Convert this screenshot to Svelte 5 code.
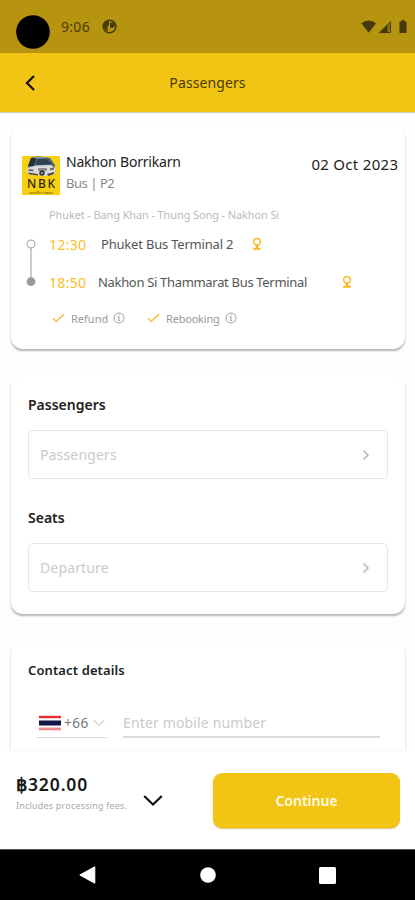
<script>
  const benefits = ['Refund', 'Rebooking'];
  const fields = [
    { title: 'Passengers', hint: 'Passengers', cls: 'pax' },
    { title: 'Seats', hint: 'Departure', cls: 'seats' }
  ];
</script>

{#snippet pin()}
  <svg class="pin" width="10" height="14" viewBox="0 0 10 14">
    <circle cx="5" cy="4.8" r="3.4" fill="#fffaf0" stroke="#f9bd2c" stroke-width="1.5" />
    <path d="M3.2 7.4h3.6L5.8 11H4.2zM1.3 10.8h7.4v2H1.3z" fill="#f8b51c" />
  </svg>
{/snippet}

<div class="screen">
  <div class="status">
    <svg width="34" height="34" viewBox="0 0 34 34"><circle cx="17" cy="17" r="16.8" /></svg>
    <span class="clock">9:06</span>
    <svg class="app-dot" width="15" height="15" viewBox="0 0 15 15">
      <circle cx="7.5" cy="7.5" r="6.3" fill="none" stroke="#453a08" stroke-width="1.6" />
      <path d="M2 3.5L5 2h2v4.5H5.6v5.8L3.6 11C1.6 9 1.5 6 2 3.5zM8 3.4h3.6l1.6 3.2-2.2 2.2H8z" fill="#453a08" />
    </svg>
    <svg class="signals" width="47" height="16" viewBox="0 0 47 16" fill="#453a08">
      <path d="M.3 4.2Q7.7-1.3 15.1 4.2L7.7 13.7z" />
      <path d="M18 14L30 2v12z" opacity=".35" />
      <path d="M18 14L26.5 5.5V14z" />
      <path d="M18.8 13.6L29.5 2.8v10.8z" fill="none" stroke="#453a08" stroke-width=".9" />
      <path d="M38.5 2.6h2V1h3v1.6h2V14h-7z" />
    </svg>
  </div>

  <header>
    <svg class="back" width="12" height="18" viewBox="0 0 12 18"><path d="M10 2L3 9l7 7" fill="none" stroke="#171100" stroke-width="2.3" /></svg>
    <h1>Passengers</h1>
  </header>

  <main>
    <section class="card trip">
      <div class="operator">
        <div class="logo">
          <svg width="38" height="22" viewBox="0 0 38 22">
            <path d="M6 10L9 2l7-1.5L28 2l5 7-1 6-25 1z" fill="#506575" />
            <path d="M6 10L9 2l6-1.5L12 10z" fill="#23313c" />
            <path d="M15 3l10 .3 5 5-16 .5z" fill="#2f4150" />
            <path d="M10 1.6l7-1.1 10 1.2-12 1z" fill="#8797a2" />
            <path d="M5 12l9-2.5L29 9l4 3v6l-9 2-17-1.5L5 16z" fill="#dcdcde" />
            <path d="M16 12h9v3h-9z" fill="#8d8f92" />
            <path d="M6.5 13l5 .6v2l-5-.6zM28 12l4-.5v2.2l-4 .6z" fill="#6a6d70" />
            <circle cx="20" cy="17" r="2.8" fill="#363a3a" />
            <circle cx="20" cy="17" r="1.1" fill="#aaa99e" />
            <path d="M6 16.5l10 1.4v1.6l-9-1.2zM25 18l7-2v2l-6 2z" fill="#4b4a42" />
          </svg>
          <b>NBK</b>
          <small>นครบริการขนส่ง</small>
        </div>
        <div class="names"><h2>Nakhon Borrikarn</h2><p>Bus | P2</p></div>
        <time class="date">02 Oct 2023</time>
      </div>
      <p class="route">Phuket - Bang Khan - Thung Song - Nakhon Si</p>
      <div class="stops">
        <svg class="track" width="10" height="50" viewBox="0 0 10 50">
          <path d="M5 9v30" stroke="#aaa" stroke-width="1.2" />
          <circle cx="5" cy="5" r="3.9" fill="#fff" stroke="#aaa" stroke-width="1.1" />
          <circle cx="5" cy="42.7" r="4.4" fill="#999" />
        </svg>
        <div class="stop-list">
          <div class="stop first"><time>12:30</time><span>Phuket Bus Terminal 2</span>{@render pin()}</div>
          <div class="stop last"><time>18:50</time><span>Nakhon Si Thammarat Bus Terminal</span>{@render pin()}</div>
        </div>
      </div>
      <div class="benefits">
        {#each benefits as label}
          <div class="benefit">
            <svg width="13" height="12" viewBox="0 0 13 12"><path d="M1 6.5L4.2 9.3 12 2.4" fill="none" stroke="#f7c146" stroke-width="1.6" /></svg>
            <span class={label.toLowerCase()}>{label}</span>
            <svg class="info" width="12" height="12" viewBox="0 0 12 12" fill="none" stroke="#999" stroke-width=".9"><circle cx="6" cy="6" r="5" /><path d="M4.7 5h1.6L5.5 8.5H7M6.4 2.7v1" /></svg>
          </div>
        {/each}
      </div>
    </section>

    <section class="card booking">
      {#each fields as field}
        <h3 class={field.cls}>{field.title}</h3>
        <div class="select {field.cls}">
          <span>{field.hint}</span>
          <svg width="8" height="12" viewBox="0 0 8 12"><path d="M1.5 1.5L6 6l-4.5 4.5" fill="none" stroke="#b8b8b8" stroke-width="1.6" /></svg>
        </div>
      {/each}
    </section>

    <section class="card contact">
      <h3>Contact details</h3>
      <div class="phone">
        <div class="code">
          <svg width="22" height="16" viewBox="0 0 22 16">
            <path fill="#fff" d="M0 0h22v16H0z" /><path fill="#e92f36" d="M0 .8h22v2.4H0z" />
            <path fill="#111548" d="M0 5.5h22v5H0z" /><path fill="#f28c91" d="M0 12.6h22v2.7H0z" />
          </svg>
          <span>+66</span>
          <svg class="drop" width="12" height="8" viewBox="0 0 12 8"><path d="M.8 1.3L6 6.3l5.2-5" fill="none" stroke="#c9c9c9" stroke-width="1.1" /></svg>
        </div>
        <div class="mobile">Enter mobile number</div>
      </div>
    </section>
  </main>

  <footer>
    <div class="price"><strong>฿320.00</strong><small>Includes processing fees.</small></div>
    <svg class="expand" width="20" height="13" viewBox="0 0 20 13"><path d="M1.2 2L10 10.5 18.8 2" fill="none" stroke="#111" stroke-width="2.2" /></svg>
    <button>Continue</button>
  </footer>

  <nav>
    <svg width="17" height="18" viewBox="0 0 17 18"><path d="M15.8.8v16.4L.8 9z" fill="#fff" stroke="#fff" stroke-linejoin="round" /></svg>
    <svg width="16" height="16" viewBox="0 0 16 16"><circle cx="8" cy="8" r="7.8" fill="#fff" /></svg>
    <svg width="17" height="17" viewBox="0 0 17 17"><rect width="17" height="17" rx="1.5" fill="#fff" /></svg>
  </nav>
</div>

<style>
  :global(body) { margin: 0; background: #fdfdff; }
  * { box-sizing: border-box; }
  h1, h2, h3, p { margin: 0; font-weight: 400; }
  svg { display: block; flex: none; }
  .screen { width: 415px; height: 900px; display: flex; flex-direction: column; overflow: hidden; background: #fdfdff; font-family: "Noto Sans", sans-serif; color: #222; white-space: nowrap; }
  .status { height: 53px; flex: none; display: flex; align-items: flex-start; padding: 15px 7px 0 16px; background: #b69410; }
  .clock { margin-left: 11px; width: 30px; line-height: 24px; font-size: 14px; color: #493d08; letter-spacing: .3px; }
  .app-dot { margin: 4px 0 0 11px; }
  .signals { margin: 4px 0 0 auto; }
  header { height: 59px; flex: none; display: grid; grid-template-columns: 46px 1fr 46px; align-items: center; background: #f2c414; box-shadow: 0 1px 1px #d9d2b8; }
  .back { margin-left: 24px; }
  h1 { text-align: center; font-size: 14px; color: #493b06; line-height: 20px; letter-spacing: .1px; }
  main { flex: 1; min-height: 0; overflow: hidden; display: flex; flex-direction: column; gap: 28px; padding: 15px 10px 0 11px; }
  .card { flex: none; background: #fff; border-radius: 12px; box-shadow: 0 2px 2px -.5px rgba(0,0,0,.25), 0 2px 2px rgba(0,0,0,.04); }
  .trip { height: 222px; margin-bottom: -1px; padding: 25px 7px 0 11px; }
  .operator { display: flex; align-items: flex-start; height: 53px; }
  .logo { width: 38px; height: 39px; margin-top: 4px; background: #f9d010; display: flex; flex-direction: column; align-items: center; overflow: hidden; flex: none; }
  .logo b { font: 500 12px/11px "Noto Sans", sans-serif; letter-spacing: 1.7px; margin-left: 2px; color: #2d2808; }
  .logo small { margin-top: 1px; font: 3.5px/5px "Noto Sans", sans-serif; color: #5a4c0d; }
  .names { margin-left: 6px; }
  h2 { font-size: 14px; line-height: 20px; color: #222; letter-spacing: -.2px; }
  .names p { font-size: 13px; line-height: 22px; color: #888; letter-spacing: -.45px; }
  .date { margin-left: auto; margin-top: 2px; margin-right: -.3px; font-size: 15px; line-height: 20px; letter-spacing: .3px; }
  .route { margin-left: 27px; font-size: 11px; line-height: 20px; color: #bbb; letter-spacing: -.12px; }
  .stops { display: flex; height: 74px; padding: 14px 0 0 4px; }
  .stop-list { margin: -14px 0 0 13px; flex: 1; }
  .stop { height: 38px; display: flex; align-items: center; }
  .stop time { width: 39px; font-size: 14px; color: #f8bd27; letter-spacing: .3px; }
  .stop span { font-size: 13px; color: #555; }
  .first span { margin-left: 13px; width: 133px; letter-spacing: -.2px; }
  .last span { margin-left: 10px; width: 210px; letter-spacing: -.32px; }
  .first .pin { margin-left: 18px; }
  .last .pin { margin-left: 34px; }
  .benefits { display: flex; gap: 22px; padding: 1px 0 0 30px; height: 38px; }
  .benefit { display: flex; align-items: center; gap: 6px; height: 36px; font-size: 11px; color: #999; }
  .refund { width: 37px; }
  .rebooking { width: 54px; letter-spacing: -.2px; }
  .info { margin-left: -1px; }
  .booking { height: 238px; padding: 19px 17px 0; }
  h3 { font-size: 14px; font-weight: 600; line-height: 20px; color: #222; }
  .select { height: 49px; border: 1px solid #e7e7e7; border-radius: 5px; display: flex; align-items: center; justify-content: space-between; padding: 0 17px 0 11px; font-size: 14px; color: #cacaca; margin: 15px 0 29px; letter-spacing: .15px; }
  .contact { height: 200px; padding: 18px 25px 0 17px; }
  .contact h3 { font-size: 13px; letter-spacing: .12px; }
  .phone { display: flex; justify-content: space-between; padding-left: 8px; margin-top: 29px; }
  .code { width: 71px; height: 29px; border-bottom: 1px solid #ddd; display: flex; padding-left: 3px; }
  .code svg { margin-top: 6px; }
  .code span { margin-left: 3px; width: 26px; font-size: 13.5px; line-height: 28px; color: #777; letter-spacing: .5px; }
  .code .drop { margin: 10px 0 0 3px; }
  .mobile { width: 257px; height: 29px; border-bottom: 2px solid #dcdcdc; font-size: 14px; line-height: 28px; color: #cacaca; letter-spacing: .15px; }
  footer { height: 99px; flex: none; background: #fff; display: flex; align-items: flex-start; padding: 22px 15px 0 16px; box-shadow: 0 -1px 1px #f8f8fa; z-index: 1; }
  .price { width: 112px; display: flex; flex-direction: column; }
  .price strong { font-size: 17.5px; line-height: 22px; font-weight: 600; color: #171717; letter-spacing: .9px; }
  .price small { font-size: 9px; line-height: 20px; color: #aaa; letter-spacing: .19px; margin-top: 1px; }
  .expand { margin: 21px 0 0 15px; }
  button { margin-left: auto; width: 187px; height: 55px; border: 0; padding: 0; border-radius: 9px; background: #f2c414; box-shadow: 0 1px 1px #d5c279; color: #fffbe5; font: 600 14px "Noto Sans", sans-serif; }
  nav { height: 50px; flex: none; background: #000; display: flex; align-items: center; justify-content: space-between; padding: 0 79px; z-index: 2; box-shadow: 0 -1px #555; }
</style>
